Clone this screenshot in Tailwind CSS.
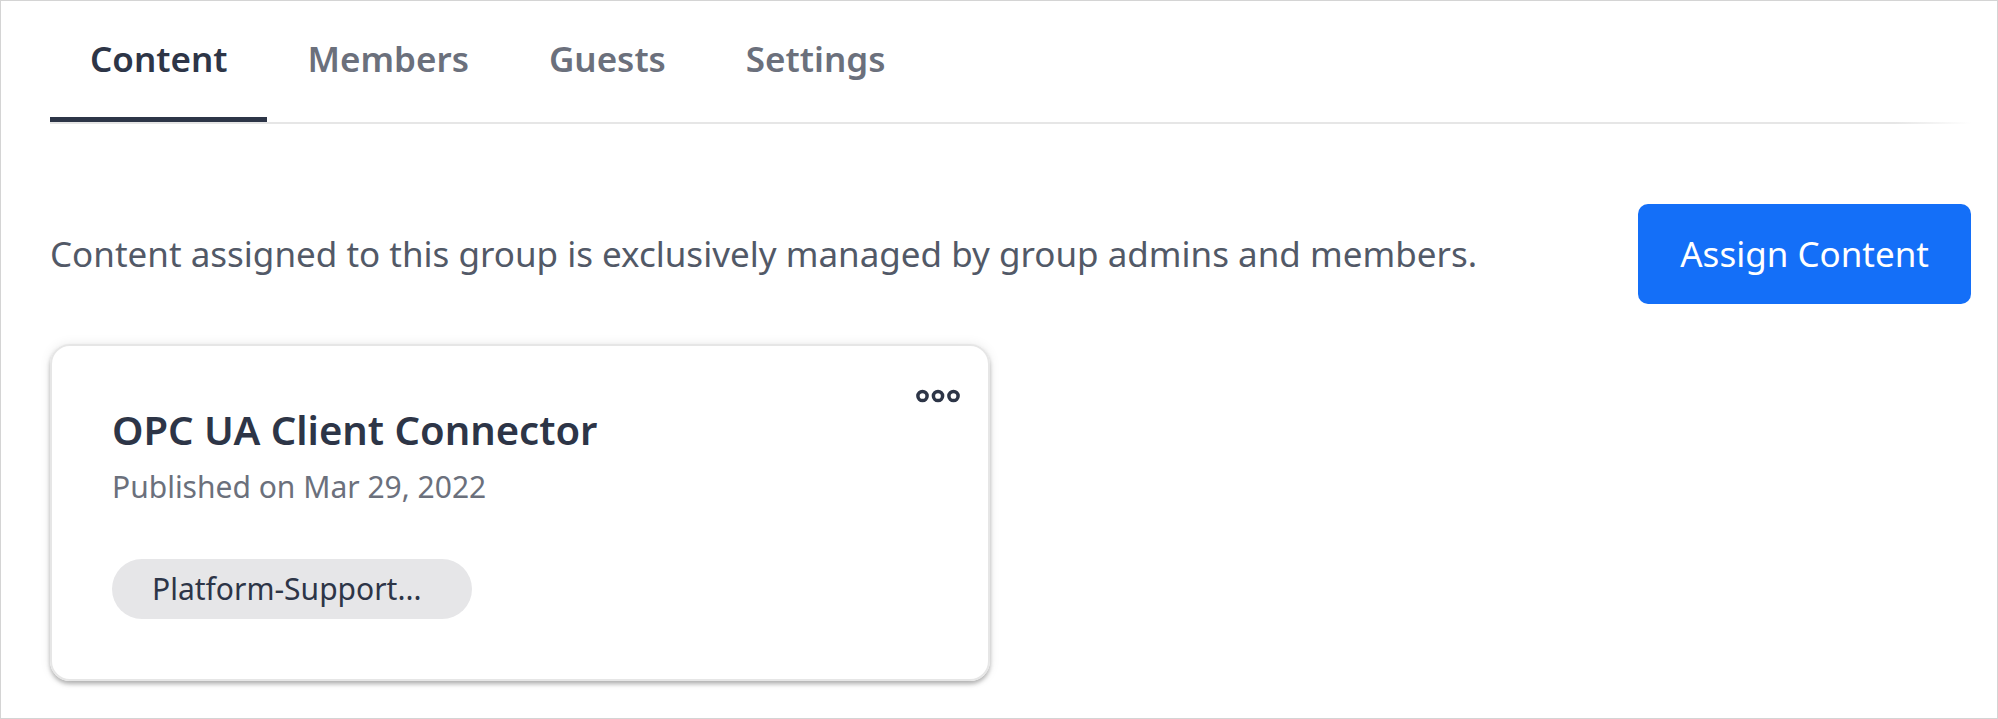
<!DOCTYPE html>
<html lang="en"><head><meta charset="utf-8"><title>Group content</title>
<script src="https://cdn.jsdelivr.net/npm/@tailwindcss/browser@4"></script></head>
<body class="min-h-screen border border-[#d4d4d4] bg-white font-['Noto_Sans',sans-serif] text-[#2d3547]">
<nav class="ml-[49px] mr-[26px]">
<div class="flex h-[121px] text-[35px] font-semibold text-[#6b707c]">
<a href="#" aria-current="page" class="border-b-5 border-[#2d3547] px-10 pt-[34px] leading-[48px] text-[#2d3547]">Content</a>
<a href="#" class="px-10 pt-[34px] leading-[48px]">Members</a>
<a href="#" class="px-10 pt-[34px] leading-[48px]">Guests</a>
<a href="#" class="px-10 pt-[34px] leading-[48px]">Settings</a>
</div>
<div class="h-[2px] bg-linear-to-r from-[#e6e6e6] from-96% to-white"></div>
</nav>
<main class="ml-[49px] mr-[26px] pt-20">
<div class="flex items-center justify-between">
<p class="text-[35px] text-[#525967]">Content assigned to this group is exclusively managed by group admins and members.</p>
<button type="button" class="h-[100px] rounded-[10px] bg-[#146ff8] px-[42px] text-[35px] text-white">Assign Content</button>
</div>
<div class="mt-10 grid grid-cols-2 gap-[41px]">
<article class="relative rounded-[20px] border-2 border-[#e6e6e6] px-[60px] pt-[56px] pb-[60px] shadow-[0_3px_4px_rgba(0,0,0,0.28),0_0_12px_rgba(0,0,0,0.08)]">
<button type="button" aria-label="More actions" class="absolute right-7 top-[42px]"><svg class="block h-4 w-11" viewBox="0 0 44 16" fill="none" stroke="#2d3547" stroke-width="3.5"><circle cx="6.5" cy="8" r="4.6"/><circle cx="22" cy="8" r="4.6"/><circle cx="37.5" cy="8" r="4.6"/></svg></button>
<h2 class="text-[40px] font-semibold leading-[56px]">OPC UA Client Connector</h2>
<p class="text-[30px] leading-[58px] text-[#6b707c]">Published on Mar 29, 2022</p>
<div class="mt-[43px] flex"><span class="h-[60px] w-[360px] rounded-full bg-[#e6e6e8] px-10 text-[30px] leading-[60px]">Platform-Support...</span></div>
</article>
</div>
</main>
</body></html>
